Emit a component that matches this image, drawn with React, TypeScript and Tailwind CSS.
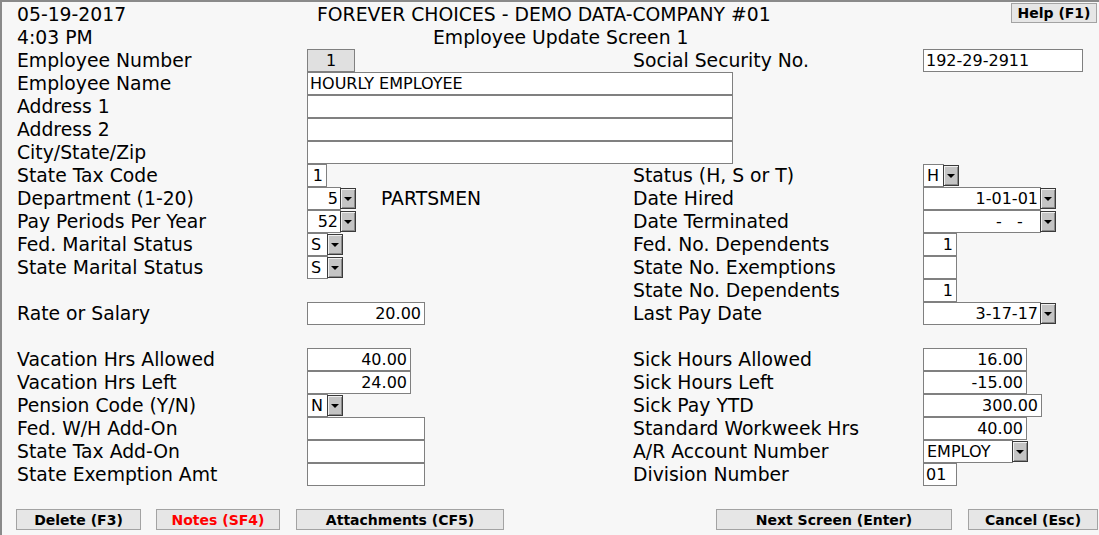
import type { ReactNode } from "react";

function Box({ w, value = "", right = false, grey = false }: { w: string; value?: string; right?: boolean; grey?: boolean }) {
  return (
    <div
      className={`${w} shrink-0 h-[23px] border border-[#808080] flex items-center text-[16px] leading-none whitespace-pre ${
        grey ? "bg-[#e0e0e0] justify-center text-[14px]" : "bg-white"
      } ${right ? "justify-end pr-[3px]" : grey ? "" : "pl-[2px]"}`}
    >
      {value}
    </div>
  );
}

function Sel({ w, value, right = false }: { w: string; value: string; right?: boolean }) {
  return (
    <div className="flex items-center h-[23px] shrink-0">
      <div
        className={`${w} shrink-0 h-[23px] border border-[#808080] bg-white flex items-center text-[16px] leading-none whitespace-pre ${
          right ? "justify-end pr-[2px]" : "pl-[3px]"
        }`}
      >
        {value}
      </div>
      <div className="w-[16px] h-[21px] shrink-0 -ml-px bg-[#c4c4c4] border border-[#3a3a3a] shadow-[inset_1px_1px_0_#f0f0f0,inset_-1px_-1px_0_#8a8a8a] flex items-center justify-center">
        <svg width="8" height="5" viewBox="0 0 8 5" className="mt-[2px]">
          <polygon points="0,0 8,0 4,4" fill="#000" />
        </svg>
      </div>
    </div>
  );
}

function Btn({ children, w, red = false }: { children: ReactNode; w: string; red?: boolean }) {
  return (
    <div
      className={`${w} h-[21px] bg-[#e6e6e6] border border-[#a3a3a3] flex items-center justify-center font-bold text-[14px] leading-none ${
        red ? "text-[#ff0000]" : "text-black"
      }`}
    >
      {children}
    </div>
  );
}

const rows: [string, ReactNode, string, ReactNode][] = [
  ["Employee Number", <Box w="w-[48px]" value="1" grey />, "Social Security No.", <Box w="w-[160px]" value="192-29-2911" />],
  ["Employee Name", <Box w="w-[426px]" value="HOURLY EMPLOYEE" />, "", null],
  ["Address 1", <Box w="w-[426px]" />, "", null],
  ["Address 2", <Box w="w-[426px]" />, "", null],
  ["City/State/Zip", <Box w="w-[426px]" />, "", null],
  ["State Tax Code", <Box w="w-[20px]" value="1" right />, "Status (H, S or T)", <Sel w="w-[21px]" value="H" />],
  [
    "Department (1-20)",
    <div className="flex items-center">
      <Sel w="w-[34px]" value="5" right />
      <span className="ml-[25px] pt-[2px]">PARTSMEN</span>
    </div>,
    "Date Hired",
    <Sel w="w-[118px]" value="1-01-01" right />,
  ],
  ["Pay Periods Per Year", <Sel w="w-[34px]" value="52" right />, "Date Terminated", <Sel w="w-[118px]" value="-   -   " right />],
  ["Fed. Marital Status", <Sel w="w-[21px]" value="S" />, "Fed. No. Dependents", <Box w="w-[34px]" value="1" right />],
  ["State Marital Status", <Sel w="w-[21px]" value="S" />, "State No. Exemptions", <Box w="w-[34px]" />],
  ["", null, "State No. Dependents", <Box w="w-[34px]" value="1" right />],
  ["Rate or Salary", <Box w="w-[118px]" value="20.00" right />, "Last Pay Date", <Sel w="w-[118px]" value="3-17-17" right />],
  ["", null, "", null],
  ["Vacation Hrs Allowed", <Box w="w-[104px]" value="40.00" right />, "Sick Hours Allowed", <Box w="w-[104px]" value="16.00" right />],
  ["Vacation Hrs Left", <Box w="w-[104px]" value="24.00" right />, "Sick Hours Left", <Box w="w-[104px]" value="-15.00" right />],
  ["Pension Code (Y/N)", <Sel w="w-[21px]" value="N" />, "Sick Pay YTD", <Box w="w-[119px]" value="300.00" right />],
  ["Fed. W/H Add-On", <Box w="w-[118px]" />, "Standard Workweek Hrs", <Box w="w-[104px]" value="40.00" right />],
  ["State Tax Add-On", <Box w="w-[118px]" />, "A/R Account Number", <Sel w="w-[90px]" value="EMPLOY" />],
  ["State Exemption Amt", <Box w="w-[118px]" />, "Division Number", <Box w="w-[34px]" value="01" />],
];

export default function App() {
  return (
    <div
      className="w-[1099px] h-[535px] bg-[#f7f7f7] border-t-2 border-l-2 border-[#8a8a8a] text-black overflow-hidden"
      style={{ fontFamily: '"DejaVu Sans", Verdana, sans-serif' }}
    >
      <div className="pt-px pl-[15px]">
        <div className="grid grid-cols-[290px_326px_290px_1fr] auto-rows-[23px] text-[18.8px] leading-none">
          <div className="flex items-center pt-[2px]">05-19-2017</div>
          <div className="col-span-2 flex items-center pt-[2px] pl-[10px] whitespace-nowrap">FOREVER CHOICES - DEMO DATA-COMPANY #01</div>
          <div className="flex items-start justify-end pr-[2px]">
            <div className="w-[86px] h-[20px] bg-[#e6e6e6] border border-[#a3a3a3] flex items-center justify-center font-bold text-[14px]">
              Help (F1)
            </div>
          </div>
          <div className="flex items-center pt-[2px]">4:03 PM</div>
          <div className="col-span-3 flex items-center pt-[2px] pl-[126px]">Employee Update Screen 1</div>
          {rows.map(([l, lf, r, rf], i) => (
            <div key={i} className="contents">
              <div className="flex items-center pt-[2px]">{l}</div>
              <div className="flex items-center">{lf}</div>
              <div className="flex items-center pt-[2px]">{r}</div>
              <div className="flex items-center">{rf}</div>
            </div>
          ))}
        </div>
        <div className="flex items-center mt-[23px] -ml-px">
          <Btn w="w-[125px]">Delete (F3)</Btn>
          <div className="ml-[15px]">
            <Btn w="w-[124px]" red>
              Notes (SF4)
            </Btn>
          </div>
          <div className="ml-[16px]">
            <Btn w="w-[208px]">Attachments (CF5)</Btn>
          </div>
          <div className="ml-[212px]">
            <Btn w="w-[236px]">Next Screen (Enter)</Btn>
          </div>
          <div className="ml-[16px]">
            <Btn w="w-[130px]">Cancel (Esc)</Btn>
          </div>
        </div>
      </div>
    </div>
  );
}
